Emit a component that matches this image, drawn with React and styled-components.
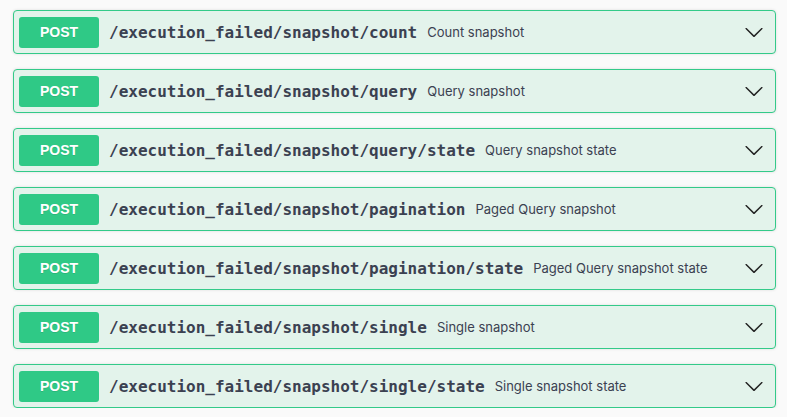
import React from "react";
import styled, { createGlobalStyle } from "styled-components";

const GlobalStyle = createGlobalStyle`
  body {
    margin: 0;
    background: #fafafa;
    font-family: "Liberation Sans", Arial, sans-serif;
  }
`;

const Liste = styled.div`
  display: flex;
  flex-direction: column;
  gap: 15px;
  padding: 10px 11px 0 13px;
`;

const Bloc = styled.div`
  display: flex;
  align-items: center;
  height: 42px;
  padding: 0 0 0 5px;
  border: 1px solid #33ca89;
  border-radius: 4px;
  background: #e3f3eb;
  box-shadow: 0 0 3px rgba(0, 0, 0, 0.12);
`;

const Methode = styled.span`
  display: flex;
  align-items: center;
  justify-content: center;
  width: 80px;
  height: 31px;
  border-radius: 3px;
  background: #2fc986;
  color: #fff;
  font-size: 14px;
  font-weight: bold;
  text-shadow: 0 1px 0 rgba(0, 0, 0, 0.1);
  flex-shrink: 0;
`;

const Chemin = styled.span`
  margin-left: 10px;
  font-family: "DejaVu Sans Mono", monospace;
  font-size: 16px;
  font-weight: bold;
  color: #3b4151;
  white-space: nowrap;
`;

const Description = styled.span`
  margin-left: 10px;
  font-family: Inter, "Liberation Sans", sans-serif;
  font-size: 13px;
  color: #3b4151;
  flex: 1;
  white-space: nowrap;
`;

const Fleche = styled.button`
  display: flex;
  align-items: center;
  justify-content: center;
  width: 42px;
  height: 100%;
  padding: 0;
  border: none;
  background: transparent;
  cursor: pointer;
`;

const routes = [
  ["/execution_failed/snapshot/count", "Count snapshot"],
  ["/execution_failed/snapshot/query", "Query snapshot"],
  ["/execution_failed/snapshot/query/state", "Query snapshot state"],
  ["/execution_failed/snapshot/pagination", "Paged Query snapshot"],
  ["/execution_failed/snapshot/pagination/state", "Paged Query snapshot state"],
  ["/execution_failed/snapshot/single", "Single snapshot"],
  ["/execution_failed/snapshot/single/state", "Single snapshot state"]
];

const Chevron = () => (
  <svg width="20" height="20" viewBox="0 0 20 20">
    <path
      fill="#222"
      d="M17.418 6.109c.272-.268.709-.268.979 0s.271.701 0 .969l-7.908 7.83c-.27.268-.707.268-.979 0l-7.908-7.83c-.27-.268-.27-.701 0-.969.271-.268.709-.268.979 0L10 13.25l7.418-7.141z"
    />
  </svg>
);

const App = () => (
  <>
    <GlobalStyle />
    <Liste>
      {routes.map(([chemin, desc]) => (
        <Bloc key={chemin}>
          <Methode>POST</Methode>
          <Chemin>{chemin}</Chemin>
          <Description>{desc}</Description>
          <Fleche>
            <Chevron />
          </Fleche>
        </Bloc>
      ))}
    </Liste>
  </>
);

export default App;
